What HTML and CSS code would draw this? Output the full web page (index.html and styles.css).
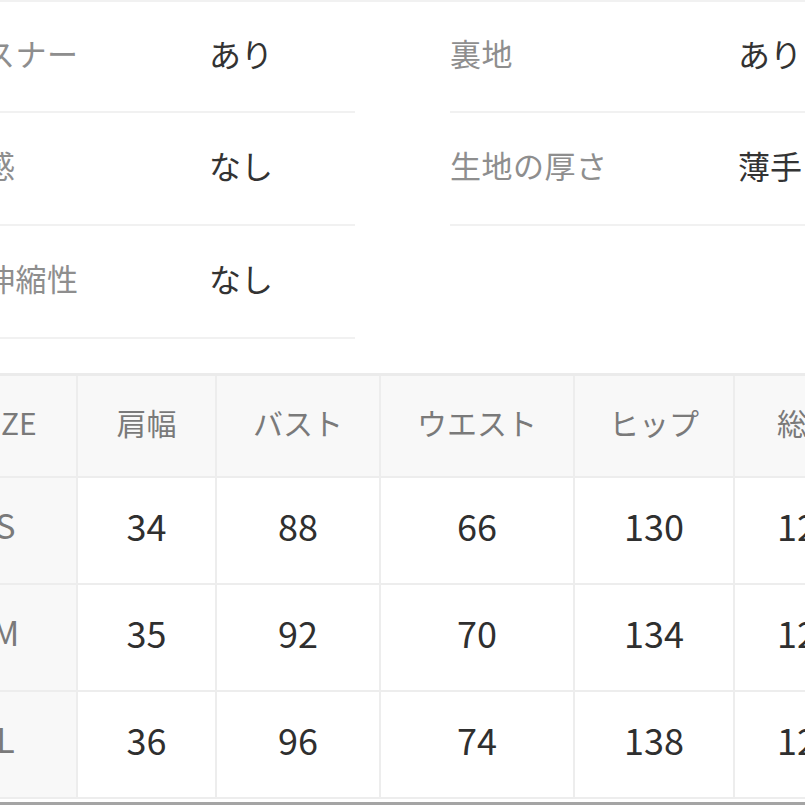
FILE: index.html
```html
<!DOCTYPE html>
<html lang="ja">
<head>
<meta charset="utf-8">
<title>サイズ・仕様</title>
<link rel="stylesheet" href="styles.css">
</head>
<body>
<div class="page">
  <div class="top-rule"></div>
  <div class="specs">
    <div class="spec"><span class="spec-label">ファスナー</span><span class="spec-value">あり</span></div>
    <div class="spec"><span class="spec-label">裏地</span><span class="spec-value">あり</span></div>
    <div class="spec"><span class="spec-label">透け感</span><span class="spec-value">なし</span></div>
    <div class="spec"><span class="spec-label">生地の厚さ</span><span class="spec-value">薄手</span></div>
    <div class="spec"><span class="spec-label">生地伸縮性</span><span class="spec-value">なし</span></div>
  </div>
  <table class="size-table">
    <colgroup>
      <col class="c-size"><col class="c-kata"><col class="c-bust"><col class="c-waist"><col class="c-hip"><col class="c-len">
    </colgroup>
    <thead>
      <tr><th>SIZE</th><th>肩幅</th><th>バスト</th><th>ウエスト</th><th>ヒップ</th><th>総丈</th></tr>
    </thead>
    <tbody>
      <tr><th>S</th><td>34</td><td>88</td><td>66</td><td>130</td><td>121</td></tr>
      <tr><th>M</th><td>35</td><td>92</td><td>70</td><td>134</td><td>122</td></tr>
      <tr><th>L</th><td>36</td><td>96</td><td>74</td><td>138</td><td>123</td></tr>
    </tbody>
  </table>
</div>
<div class="screen-edge"></div>
</body>
</html>
```

FILE: styles.css
```css
html, body {
  margin: 0;
  padding: 0;
  background: #ffffff;
}
body {
  width: 805px;
  height: 805px;
  overflow: hidden;
  position: relative;
  font-family: "Noto Sans CJK JP", "Noto Sans", sans-serif;
}
.page {
  margin-left: -79px;
  width: 1100px;
}
.top-rule {
  height: 2px;
  background: #f1f1f1;
}
.specs {
  display: grid;
  grid-template-columns: 434px 434px;
  column-gap: 95px;
}
.spec {
  display: flex;
  align-items: center;
  height: 103px;
  padding-bottom: 8px;
  border-bottom: 2px solid #f1f1f1;
  box-sizing: content-box;
}
.spec:nth-child(-n+2) {
  height: 101px;
}
.spec-label {
  width: 288px;
  flex: none;
  font-size: 31px;
  color: #8e8e8e;
  letter-spacing: 0.5px;
}
.spec-value {
  font-size: 32px;
  color: #333333;
}
.size-table {
  margin-top: 34px;
  margin-left: 12px;
  border-collapse: collapse;
  table-layout: fixed;
  width: 946px;
  border-top: 3px solid #ebebeb;
}
.c-size { width: 143px; }
.c-kata { width: 139px; }
.c-bust { width: 164px; }
.c-waist { width: 194px; }
.c-hip { width: 160px; }
.c-len { width: 146px; }
.size-table th,
.size-table td {
  border: 2px solid #ededed;
  text-align: center;
  padding: 0;
}
.size-table thead th {
  height: 92px;
  padding-bottom: 8px;
  background: #f8f8f8;
  font-weight: normal;
  font-size: 30px;
  color: #7a7a7a;
}
.size-table tbody th {
  background: #f8f8f8;
  font-weight: normal;
  font-size: 34px;
  color: #7a7a7a;
}
.size-table tbody th,
.size-table tbody td {
  height: 93px;
  padding-bottom: 12px;
}
.size-table tbody td {
  font-size: 36px;
  color: #2f2f2f;
}
.screen-edge {
  position: absolute;
  left: 0;
  right: 0;
  bottom: 0;
  height: 3px;
  background: #a4a4a4;
}
```
